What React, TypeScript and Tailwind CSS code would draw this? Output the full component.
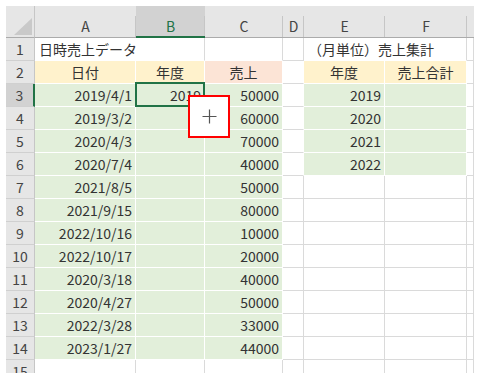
import React from 'react';

type Fill = 'y' | 'p' | 'g' | null;

const COLS = ['A', 'B', 'C', 'D', 'E', 'F'];

const fillClass: Record<string, string> = {
  y: 'bg-[#fff2cc]',
  p: 'bg-[#fce4d6]',
  g: 'bg-[#e2efda]',
};

// what is in each row: [A, B, C, D, E, F]
const data: string[][] = [
  ['日時売上データ', '', '', '', '（月単位）売上集計', ''],
  ['日付', '年度', '売上', '', '年度', '売上合計'],
  ['2019/4/1', '2019', '50000', '', '2019', ''],
  ['2019/3/2', '', '60000', '', '2020', ''],
  ['2020/4/3', '', '70000', '', '2021', ''],
  ['2020/7/4', '', '40000', '', '2022', ''],
  ['2021/8/5', '', '50000', '', '', ''],
  ['2021/9/15', '', '80000', '', '', ''],
  ['2022/10/16', '', '10000', '', '', ''],
  ['2022/10/17', '', '20000', '', '', ''],
  ['2020/3/18', '', '40000', '', '', ''],
  ['2020/4/27', '', '50000', '', '', ''],
  ['2022/3/28', '', '33000', '', '', ''],
  ['2023/1/27', '', '44000', '', '', ''],
  ['', '', '', '', '', ''],
];

function fill(r: number, c: number): Fill {
  // r: 1-based row, c: 0-based column (6 = spare column)
  if (r === 2) return c === 2 ? 'p' : c === 3 || c > 5 ? null : 'y';
  if (r >= 3 && r <= 14 && c <= 2) return 'g';
  if (r >= 3 && r <= 6 && (c === 4 || c === 5)) return 'g';
  return null;
}

function Cell({ r, c, text }: { r: number; c: number; text: string }) {
  const f = fill(r, c);
  const overflowRight = r === 1 && (c === 0 || c === 4);
  const rightGray = !overflowRight && f === null && fill(r, c + 1) === null;
  const bottomGray = f === null && fill(r + 1, c) === null;
  const isHeader = r === 2;
  const isLeft = r === 1;
  return (
    <div
      className={clsx(
        'relative flex items-center border-r border-b text-[14px] text-[#333] whitespace-nowrap',
        f ? fillClass[f] : 'bg-white',
        rightGray ? 'border-r-[#dadada]' : 'border-r-white',
        bottomGray ? 'border-b-[#dadada]' : 'border-b-white',
        isHeader ? 'justify-center' : isLeft ? 'justify-start pl-[4px]' : 'justify-end pr-[3px]'
      )}
    >
      {text && <span className="relative z-10 pt-[1px]">{text}</span>}
      {r === 3 && c === 1 && (
        <div className="absolute -left-px -top-[2px] -right-px -bottom-px z-20 border-2 border-[#217346]" />
      )}
    </div>
  );
}

function clsx(...a: (string | false | undefined)[]) {
  return a.filter(Boolean).join(' ');
}

export default function App() {
  return (
    <div className="relative w-[483px] h-[382px] bg-white pl-[6px] pt-[6px] font-['Noto_Sans_CJK_JP','Noto_Sans',sans-serif]">
      <div className="w-[468px] h-[367px] overflow-hidden grid grid-cols-[29px_101px_69px_78px_21px_81px_82px_7px] grid-rows-[32px_repeat(15,23px)]">
        {/* corner */}
        <div className="relative bg-[#e6e6e6] border-r border-b border-r-[#c6c6c6] border-b-[#ababab]">
          <svg className="absolute right-[2px] bottom-[2px]" width="18" height="17" viewBox="0 0 18 17">
            <polygon points="18,0 18,17 0,17" fill="#c9c9c9" />
          </svg>
        </div>
        {/* column letters */}
        {[...COLS, ''].map((l, i) => (
          <div
            key={l + i}
            className={clsx(
              'relative flex items-center justify-center pt-[10px] text-[14px]',
              l === 'B'
                ? 'bg-[#d2d2d2] text-[#217346] border-b-2 border-b-[#217346]'
                : 'bg-[#e6e6e6] text-[#444] border-b border-b-[#ababab]'
            )}
          >
            {l}
            {i < 6 && <span className="absolute right-0 top-[10px] bottom-0 w-px bg-[#c6c6c6]" />}
          </div>
        ))}
        {data.map((row, ri) => {
          const r = ri + 1;
          return (
            <React.Fragment key={r}>
              <div
                className={clsx(
                  'flex items-center justify-center border-b border-b-[#d0d0d0] text-[14px] text-[#444]',
                  r === 3
                    ? 'bg-[#d2d2d2] border-r-2 border-r-[#217346]'
                    : 'bg-[#e6e6e6] border-r border-r-[#c6c6c6]'
                )}
              >
                {r}
              </div>
              {row.map((t, c) => (
                <Cell key={c} r={r} c={c} text={t} />
              ))}
              <Cell r={r} c={6} text="" />
            </React.Fragment>
          );
        })}
      </div>
      {/* paste options box */}
      <div className="absolute left-[188px] top-[95px] z-30 w-[42px] h-[43px] border-2 border-[#ff0000] bg-white flex items-center justify-center">
        <svg width="15" height="15" viewBox="0 0 15 15">
          <path d="M7.5 0.5V14.5M0.5 7.5H14.5" stroke="#555" strokeWidth="1.2" />
        </svg>
      </div>
    </div>
  );
}
